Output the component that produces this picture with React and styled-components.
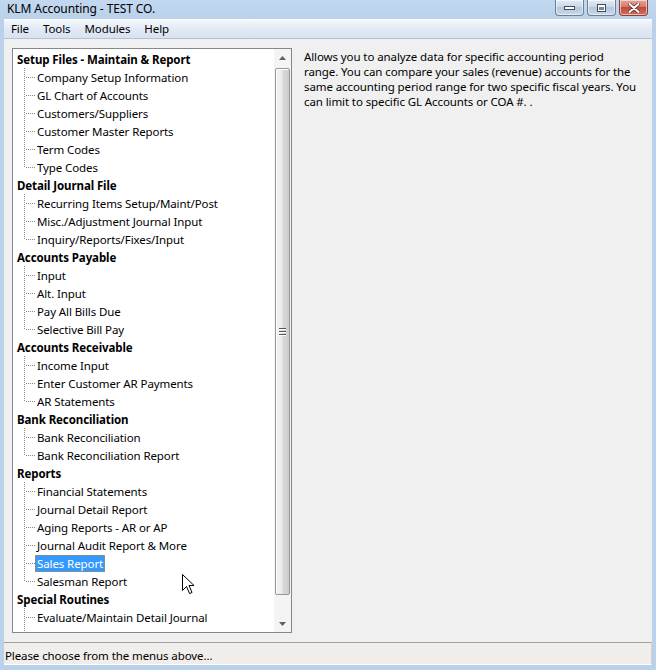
import React from "react"
import styled, { createGlobalStyle } from "styled-components"

const GlobalStyle = createGlobalStyle`
  html, body {
    margin: 0;
    padding: 0;
    background: #b9d1ea;
  }
  body {
    font-family: "Noto Sans", "Open Sans", sans-serif;
    font-size: 11.5px;
    letter-spacing: -0.1px;
    color: #000;
  }
`

const tree = [
  {
    title: "Setup Files - Maintain & Report",
    items: [
      "Company Setup Information",
      "GL Chart of Accounts",
      "Customers/Suppliers",
      "Customer Master Reports",
      "Term Codes",
      "Type Codes",
    ],
  },
  {
    title: "Detail Journal File",
    items: [
      "Recurring Items Setup/Maint/Post",
      "Misc./Adjustment Journal Input",
      "Inquiry/Reports/Fixes/Input",
    ],
  },
  {
    title: "Accounts Payable",
    items: ["Input", "Alt. Input", "Pay All Bills Due", "Selective Bill Pay"],
  },
  {
    title: "Accounts Receivable",
    items: ["Income Input", "Enter Customer AR Payments", "AR Statements"],
  },
  {
    title: "Bank Reconciliation",
    items: ["Bank Reconciliation", "Bank Reconciliation Report"],
  },
  {
    title: "Reports",
    items: [
      "Financial Statements",
      "Journal Detail Report",
      "Aging Reports - AR or AP",
      "Journal Audit Report & More",
      "Sales Report",
      "Salesman Report",
    ],
  },
  {
    title: "Special Routines",
    items: ["Evaluate/Maintain Detail Journal", "Accumulate/Use Bank Checks"],
  },
]

const description = [
  "Allows you to analyze data for specific accounting period",
  "range. You can compare your sales (revenue) accounts for the",
  "same accounting period range for two specific fiscal years. You",
  "can limit to specific GL Accounts or COA #. .",
]

const Window = styled.div`
  width: 656px;
  height: 670px;
  background: #b9d1ea;
  display: flex;
  flex-direction: column;
  overflow: hidden;
`

const TitleBar = styled.div`
  height: 19px;
  flex: none;
  display: flex;
  justify-content: space-between;
  align-items: flex-start;
  padding-left: 7px;
  padding-right: 8px;
  background: linear-gradient(#c2d8f0, #b9d1ea);
`

const Title = styled.span`
  line-height: 18px;
  font-size: 12px;
`

const Captions = styled.div`
  display: flex;
  gap: 3px;
`

const CaptionButton = styled.div`
  width: 29px;
  height: 16px;
  box-sizing: border-box;
  border: 1px solid ${({ $close }) => ($close ? "#86433b" : "#6d7f97")};
  border-top: none;
  border-radius: 0 0 4px 4px;
  background: ${({ $close }) =>
    $close
      ? "linear-gradient(#e6a598, #d67b6b 45%, #c24c38 50%, #d36d5c)"
      : "linear-gradient(#e3ebf5, #cbd8e8 45%, #b6c7dc 50%, #c9d8ea)"};
  box-shadow: inset 0 0 0 1px rgba(255, 255, 255, 0.55);
  display: flex;
  align-items: center;
  justify-content: center;
`

const Client = styled.div`
  flex: 1;
  display: flex;
  flex-direction: column;
  margin: 0 4px 5px 4px;
  min-height: 0;
`

const MenuBar = styled.div`
  height: 18px;
  flex: none;
  display: flex;
  align-items: center;
  background: linear-gradient(#f4f7fc, #e2e9f5 50%, #d9e2f1);
  border-top: 1px solid #fbfcfe;
  border-bottom: 1px solid #b7c2d4;
`

const MenuItem = styled.span`
  padding: 0 7px;
  line-height: 18px;
`

const Content = styled.div`
  flex: 1;
  min-height: 0;
  display: flex;
  gap: 12px;
  padding: 9px 0 9px 8px;
  background: #f0f0f0;
`

const TreeBox = styled.div`
  position: relative;
  width: 280px;
  flex: none;
  box-sizing: border-box;
  border: 1px solid #828790;
  background: #fff;
  display: flex;
  overflow: hidden;
`

const TreeList = styled.div`
  flex: 1;
  padding-top: 1px;
  overflow: hidden;
`

const Row = styled.div`
  position: relative;
  height: 18px;
  display: flex;
  align-items: center;
  white-space: nowrap;
`

const GroupTitle = styled.span`
  font-weight: 700;
  padding-left: 4px;
`

const Connector = styled.span`
  position: relative;
  width: 21px;
  height: 18px;
  flex: none;

  &::before {
    content: "";
    position: absolute;
    left: 11px;
    top: 0;
    width: 1px;
    height: ${({ $last }) => ($last ? "10px" : "18px")};
    background: repeating-linear-gradient(
      to bottom,
      #8a8a8a 0 1px,
      transparent 1px 2px
    );
  }

  &::after {
    content: "";
    position: absolute;
    left: 13px;
    top: 9px;
    width: 9px;
    height: 1px;
    background: repeating-linear-gradient(
      to right,
      #8a8a8a 0 1px,
      transparent 1px 2px
    );
  }
`

const Label = styled.span`
  padding: 0 1px;
  margin-left: 1px;
  line-height: 15px;
  box-sizing: border-box;
  border: 1px dotted ${({ $selected }) => ($selected ? "#c98a2e" : "transparent")};
  background: ${({ $selected }) => ($selected ? "#3399ff" : "transparent")};
  color: ${({ $selected }) => ($selected ? "#fff" : "#000")};
`

const Scrollbar = styled.div`
  width: 17px;
  flex: none;
  display: flex;
  flex-direction: column;
  background: #f4f4f4;
`

const ArrowCell = styled.div`
  height: 17px;
  flex: none;
  display: flex;
  align-items: center;
  justify-content: center;
`

const Track = styled.div`
  flex: 1;
  display: flex;
  flex-direction: column;
  padding: 2px 0 20px 1px;
`

const Thumb = styled.div`
  flex: 1;
  width: 15px;
  box-sizing: border-box;
  border: 1px solid #979797;
  border-radius: 2px;
  background: linear-gradient(
    to right,
    #f4f4f4,
    #ebebeb 45%,
    #d9d9d9 55%,
    #cbcbcb
  );
  box-shadow: inset 1px 1px 0 #fff;
  display: flex;
  align-items: center;
  justify-content: center;
`

const Grip = styled.div`
  width: 7px;
  display: flex;
  flex-direction: column;
  gap: 1px;

  span {
    height: 1px;
    background: #555;
    box-shadow: 0 1px 0 #fff;
    margin-bottom: 1px;
  }
`

const Description = styled.div`
  padding-top: 1px;
  line-height: 15px;
  white-space: nowrap;
`

const StatusBar = styled.div`
  height: 17px;
  flex: none;
  display: flex;
  align-items: center;
  padding: 4px 0 0 1px;
  box-sizing: content-box;
  line-height: 16px;
  background: #f0edea;
  border-top: 1px solid #a0a0a0;
  border-bottom: 1px solid #fff;
  border-right: 1px solid #d4d0c8;
`

const Cursor = styled.svg`
  position: absolute;
  left: 169px;
  top: 525px;
`

const TreeRows = () =>
  tree.flatMap((group) => [
    <Row key={group.title}>
      <GroupTitle>{group.title}</GroupTitle>
    </Row>,
    ...group.items.map((item, i) => (
      <Row key={group.title + item}>
        <Connector $last={i === group.items.length - 1} />
        <Label $selected={item === "Sales Report"}>{item}</Label>
      </Row>
    )),
  ])

export default function App() {
  return (
    <>
      <GlobalStyle />
      <Window>
        <TitleBar>
          <Title>KLM Accounting - TEST CO.</Title>
          <Captions>
            <CaptionButton>
              <svg width="11" height="4" viewBox="0 0 11 4">
                <rect x="0.5" y="0.5" width="10" height="3" fill="#fff" stroke="#3f4a5a" />
              </svg>
            </CaptionButton>
            <CaptionButton>
              <svg width="9" height="8" viewBox="0 0 9 8">
                <rect x="0.5" y="0.5" width="8" height="7" fill="#fff" stroke="#3f4a5a" />
                <rect x="2" y="3" width="5" height="3" fill="#7c8696" />
              </svg>
            </CaptionButton>
            <CaptionButton $close>
              <svg width="12" height="10" viewBox="0 0 12 10">
                <path
                  d="M1.5 1 L10.5 9 M10.5 1 L1.5 9"
                  stroke="#5a2a24"
                  strokeWidth="3.4"
                  strokeLinecap="round"
                />
                <path
                  d="M1.5 1 L10.5 9 M10.5 1 L1.5 9"
                  stroke="#fff"
                  strokeWidth="2"
                  strokeLinecap="round"
                />
              </svg>
            </CaptionButton>
          </Captions>
        </TitleBar>
        <Client>
          <MenuBar>
            <MenuItem>File</MenuItem>
            <MenuItem>Tools</MenuItem>
            <MenuItem>Modules</MenuItem>
            <MenuItem>Help</MenuItem>
          </MenuBar>
          <Content>
            <TreeBox>
              <TreeList>
                <TreeRows />
              </TreeList>
              <Scrollbar>
                <ArrowCell>
                  <svg width="7" height="4" viewBox="0 0 7 4">
                    <path d="M0 4 L3.5 0 L7 4 Z" fill="#606060" />
                  </svg>
                </ArrowCell>
                <Track>
                  <Thumb>
                    <Grip>
                      <span />
                      <span />
                      <span />
                    </Grip>
                  </Thumb>
                </Track>
                <ArrowCell>
                  <svg width="7" height="4" viewBox="0 0 7 4">
                    <path d="M0 0 L7 0 L3.5 4 Z" fill="#606060" />
                  </svg>
                </ArrowCell>
              </Scrollbar>
              <Cursor width="13" height="21" viewBox="0 0 13 21">
                <path
                  d="M0.5 0.5 L0.5 16.5 L4.5 12.5 L7.5 19.5 L10 18.5 L7 11.5 L12 11.5 Z"
                  fill="#fff"
                  stroke="#000"
                  strokeWidth="1"
                  strokeLinejoin="miter"
                />
              </Cursor>
            </TreeBox>
            <Description>
              {description.map((line) => (
                <div key={line}>{line}</div>
              ))}
            </Description>
          </Content>
          <StatusBar>Please choose from the menus above...</StatusBar>
        </Client>
      </Window>
    </>
  )
}
